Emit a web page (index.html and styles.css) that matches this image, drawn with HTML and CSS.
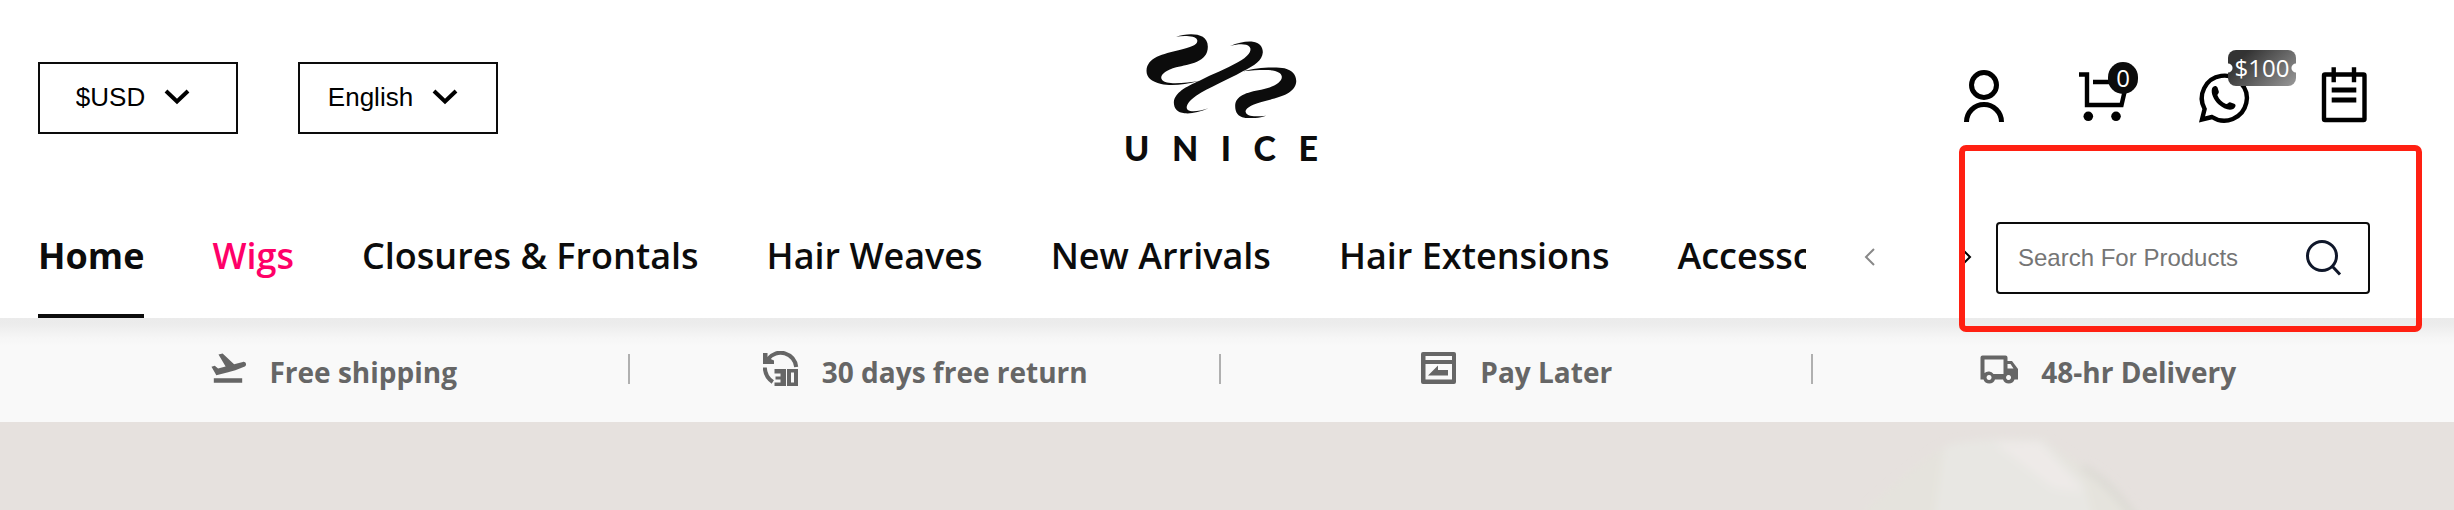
FILE: index.html
```
<!doctype html>
<html lang="en">
<head>
    <meta charset="utf-8">
    <meta name="viewport" content="width=device-width, initial-scale=1">
    <title>UNICE</title>
    <link rel="stylesheet" href="styles.css">
</head>
<body>

<header class="header">
    <div class="header-top">
        <div class="switchers">
            <label class="switcher">
                <select name="currency" aria-label="Currency">
                    <option>$USD</option>
                </select>
                <svg class="chevron" viewBox="0 0 26 16"><path d="M2 2l11 10.500L24 2"/></svg>
            </label>
            <label class="switcher">
                <select name="language" aria-label="Language">
                    <option>English</option>
                </select>
                <svg class="chevron" viewBox="0 0 26 16"><path d="M2 2l11 10.500L24 2"/></svg>
            </label>
        </div>

        <a href="#" class="logo" aria-label="UNICE">
            <svg class="logo-mark" viewBox="140 40 452 252">
                <path d="M230 48C262 38 325 32 325 78C325 125 270 130 230 140C195 150 178 166 188 178C200 194 260 187 300 180C250 195 210 195 185 190C155 182 141 170 141 150C143 110 190 100 240 88C275 80 297 72 293 58C288 45 255 45 230 48Z"/>
                <path d="M392 76C415 66 440 61 460 63C480 65 490 78 490 95C488 120 465 135 430 152C380 180 330 200 290 225C265 243 256 258 265 268C275 275 300 272 327 263C300 275 275 280 255 278C235 276 223 265 223 245C225 215 260 198 300 180C340 160 380 145 415 125C445 108 460 90 450 78C440 68 415 70 392 76Z"/>
                <path d="M430 152C470 140 530 138 555 143C580 150 592 165 590 185C585 220 540 230 500 240C460 250 440 260 438 272C440 290 470 288 500 285C480 293 450 294 435 291C415 287 407 275 407 255C408 225 440 215 485 207C520 200 548 185 547 168C545 148 510 143 430 152Z"/>
            </svg>
            <span class="logo-name"><span>U</span><span>N</span><span>I</span><span>C</span><span>E</span></span>
        </a>

        <div class="actions">
            <a href="#" class="action" aria-label="Account">
                <svg viewBox="0 0 52 52">
                    <circle cx="26" cy="15" r="12.500"/>
                    <path d="M8.500 52a17.500 17.500 0 0 1 35 0"/>
                </svg>
            </a>
            <a href="#" class="action" aria-label="Cart">
                <svg viewBox="0 0 52 52">
                    <path class="thin" d="M1 4.500h8V35h34.500l3-13M15 12h20"/>
                    <circle class="solid" cx="10.300" cy="46.300" r="4.800"/>
                    <circle class="solid" cx="38" cy="46.300" r="4.800"/>
                </svg>
                <span class="count">0</span>
            </a>
            <a href="#" class="action" aria-label="WhatsApp">
                <svg viewBox="0 0 52 52">
                    <path class="thin" d="M14 47L4 49.500l2.600-10.500A22.500 22.500 0 1 1 14 47z"/>
                    <path class="solid" d="M14 18.500c1-3 4.500-3.500 5.500-1l1.300 4c.5 1.700-1.800 2.700-1.300 4 1.600 4 4.500 6.800 8.500 8.500 1.500.5 2.500-2 4-1.700l4.200 1.500c2.500 1 1.200 4-1 5.200-4 2-10-.5-14.500-4.500-5-4.800-8-11-6.700-16z"/>
                </svg>
                <span class="coupon">$100</span>
            </a>
            <a href="#" class="action" aria-label="Orders">
                <svg viewBox="0 0 52 52">
                    <rect class="thin" x="6" y="4.500" width="40.500" height="45.500" rx="1"/>
                    <path class="thin" d="M15.700-2.700v15M36-2.700v15"/>
                    <path d="M13.700 20h24.600M13.700 30h24.600"/>
                </svg>
            </a>
        </div>
    </div>

    <div class="header-bottom">
        <nav class="menu">
            <a href="#" class="menu-item active">Home</a>
            <a href="#" class="menu-item hot">Wigs</a>
            <a href="#" class="menu-item">Closures &amp; Frontals</a>
            <a href="#" class="menu-item">Hair Weaves</a>
            <a href="#" class="menu-item">New Arrivals</a>
            <a href="#" class="menu-item">Hair Extensions</a>
            <a href="#" class="menu-item">Accessories</a>
        </nav>
        <div class="menu-arrows">
            <button type="button" class="arrow disabled" aria-label="Previous">
                <svg viewBox="0 0 12 18"><path d="M10 1L2 9l8 8"/></svg>
            </button>
            <button type="button" class="arrow" aria-label="Next">
                <svg viewBox="0 0 12 18"><path d="M2 1l8 8-8 8"/></svg>
            </button>
        </div>
        <form class="search" action="/" method="get">
            <input type="text" name="q" placeholder="Search For Products" aria-label="Search For Products">
            <button type="submit" aria-label="Search">
                <svg viewBox="0 0 36 36"><circle cx="16" cy="16" r="14.500"/><path d="M26 26l8 8.500"/></svg>
            </button>
        </form>
    </div>

    <div class="highlight"></div>
</header>

<ul class="services">
    <li>
        <svg viewBox="0.400 2 21.700 21.700"><path d="M2.700 18.400h17.100v2.800H2.700zM22.070 9.640c-.21-.8-1.040-1.280-1.840-1.060L14.920 10l-6.900-6.430-2.500.6 4.300 7.100-4.560 1.310-1.970-1.700-2 .6 1.820 3.160 1.100 2 1.800-.43 5.310-1.420 4.350-1.160L21 11.490c.81-.23 1.280-1.050 1.070-1.850z"/></svg>
        <span>Free shipping</span>
    </li>
    <li>
        <svg viewBox="0 0 36 36">
            <path class="line" d="M5 8a15.700 15.700 0 0 1 28.200 8M1.800 16.500c.2 6 3 11 8 14.500"/>
            <path d="M0 2h4.500v4.500l6.500 3V13H0z"/>
            <path fill-rule="evenodd" d="M11.500 18h11.500v17H11.500v-3.500h6v-3h-5v-3h5v-3h-6zM24 18h11v17H24zM28 21.500v10h3v-10z"/>
        </svg>
        <span>30 days free return</span>
    </li>
    <li>
        <svg viewBox="0 0 36 36">
            <path fill-rule="evenodd" d="M2 1h31q2 0 2 2v28q0 2-2 2H2q-2 0-2-2V3q0-2 2-2zM4.500 5v4h26.500V5zM4.500 13v15.500h26.500V13z"/>
            <path d="M7 24.500l10-10v4.500h10v5.500z"/>
        </svg>
        <span>Pay Later</span>
    </li>
    <li>
        <svg class="truck" viewBox="0 0 38 36">
            <path fill-rule="evenodd" d="M2.500 4.500h23q2 0 2 2V10H32l6 8v10.500h-3.500a6 5.500 0 0 1-11.500 0h-8a6 5.500 0 0 1-11.500 0H.500v-22q0-2 2-2zM4.500 8.500v13.500a6 6 0 0 1 9 1h10v-14.500zM27.500 13v4.500h6L30.500 13zM9 24a2.500 2.500 0 1 0 .1 0zM28.500 24a2.500 2.500 0 1 0 .1 0z"/>
        </svg>
        <span>48-hr Delivery</span>
    </li>
</ul>

<section class="banner">
    <svg class="banner-art" viewBox="0 0 300 88">
        <defs>
            <filter id="soft"><feGaussianBlur stdDeviation="4"/></filter>
        </defs>
        <g filter="url(#soft)">
            <path fill="#e5e3dd" d="M0 100Q40 60 85 28L190 20Q260 60 290 100z"/>
            <path fill="#e8e7e3" d="M90 25Q120 14 190 18L230 60L240 100H80z"/>
            <path fill="#eeeae8" d="M140 20H185L230 70L200 66z"/>
            <path fill="#dcdad4" d="M228 42Q255 52 288 100H280Q255 65 228 48z"/>
        </g>
    </svg>
</section>

</body>
</html>
```
FILE: styles.css
```
* {
    box-sizing: border-box;
}

body {
    margin: 0;
    background: #e6e1de;
    color: #0c0c0c;
    font-family: "Open Sans", "Noto Sans", sans-serif;
}

a {
    color: inherit;
    text-decoration: none;
}

button {
    border: none;
    background: none;
    padding: 0;
    cursor: pointer;
}

.header {
    position: relative;
    background: #fff;
    padding: 0 50px 0 38px;
}

.header-top {
    display: grid;
    grid-template-columns: 1fr auto 1fr;
    align-items: center;
    height: 198px;
    padding-bottom: 2px;
}

.switchers {
    display: flex;
    gap: 60px;
}

.switcher {
    display: flex;
    align-items: center;
    justify-content: center;
    gap: 19px;
    width: 200px;
    height: 72px;
    border: 2px solid #0c0c0c;
    padding: 0 10px 2px 0;
}

.switcher select {
    appearance: none;
    field-sizing: content;
    border: none;
    background: none;
    padding: 0;
    color: #000;
    font-family: "Liberation Sans", Arial, sans-serif;
    font-size: 26px;
}

.chevron {
    width: 26px;
    height: 16px;
    fill: none;
    stroke: #000;
    stroke-width: 4;
}

.logo {
    display: flex;
    flex-direction: column;
    align-items: center;
    gap: 12px;
    padding-top: 4px;
}

.logo-mark {
    width: 151px;
    height: 84px;
    fill: #0c0c0c;
}

.logo-name {
    display: flex;
    justify-content: space-between;
    width: 194px;
    font-family: Lato, sans-serif;
    font-size: 34px;
    font-weight: 900;
    line-height: 36px;
}

.actions {
    display: flex;
    justify-content: flex-end;
    gap: 68px;
    padding: 0 34px 4px 0;
}

.action {
    position: relative;
    width: 52px;
    height: 52px;
}

.action svg {
    display: block;
    overflow: visible;
    fill: none;
    stroke: #000;
    stroke-width: 5;
}

.action .thin {
    stroke-width: 4.4;
}

.action .solid {
    fill: #000;
    stroke: none;
}

.count,
.coupon {
    position: absolute;
    left: 30px;
    color: #fff;
    text-align: center;
}

.count {
    top: -8px;
    width: 30px;
    border-radius: 16px;
    background: #0c0c0c;
    font-size: 24px;
    line-height: 32px;
}

.coupon {
    top: -20px;
    width: 68px;
    border-radius: 8px;
    background:
        radial-gradient(circle at 0 50%, #fff 4px, transparent 5px),
        radial-gradient(circle at 100% 50%, #fff 4px, transparent 5px),
        linear-gradient(135deg, #333 20%, #999);
    font-size: 24px;
    line-height: 36px;
}

.header-bottom {
    display: flex;
    align-items: center;
    padding-right: 34px;
}

.menu {
    display: flex;
    flex: 1;
    gap: 68px;
    min-width: 0;
    overflow: hidden;
}

.menu-item {
    flex: none;
    border-bottom: 4px solid transparent;
    font-size: 36px;
    font-weight: 600;
    line-height: 116px;
    white-space: nowrap;
}

.menu-item.active {
    border-color: #0c0c0c;
    font-weight: 700;
}

.menu-item.hot {
    color: #ff0068;
}

.menu-arrows {
    display: flex;
    gap: 56px;
    margin: 0 10px 0 44px;
}

.arrow {
    width: 40px;
    height: 40px;
}

.arrow svg {
    width: 12px;
    height: 18px;
    fill: none;
    stroke: #000;
    stroke-width: 2;
}

.arrow.disabled svg {
    stroke: #888;
}

.search {
    display: flex;
    align-items: center;
    width: 374px;
    height: 72px;
    border: 2px solid #0c0c0c;
    border-radius: 4px;
    padding: 0 26px 0 20px;
}

.search input {
    flex: 1;
    min-width: 0;
    border: none;
    outline: none;
    padding: 0;
    font-family: "Liberation Sans", Arial, sans-serif;
    font-size: 24px;
}

.search input::placeholder {
    color: #757575;
}

.search svg {
    display: block;
    width: 36px;
    height: 36px;
    fill: none;
    stroke: #0f172a;
    stroke-width: 3;
}

.highlight {
    position: absolute;
    z-index: 1;
    right: 32px;
    bottom: -14px;
    width: 463px;
    height: 187px;
    border: 6px solid #ff2012;
    border-radius: 7px;
    pointer-events: none;
}

.services {
    display: grid;
    grid-template-columns: repeat(4, 1fr);
    margin: 0;
    padding: 0 50px 0 38px;
    list-style: none;
    background: linear-gradient(#ebebeb, #ececec 6px, #f6f6f6 20px, #f9f9f9 28px);
    color: #666;
}

.services li {
    position: relative;
    display: flex;
    align-items: center;
    justify-content: center;
    gap: 23px;
    height: 104px;
    padding-top: 4px;
    font-size: 28px;
    font-weight: 700;
    line-height: 36px;
}

.services li + li::before {
    content: "";
    position: absolute;
    left: -2px;
    top: 36px;
    width: 2px;
    height: 30px;
    background: #b0b0b0;
}

.services svg {
    width: 36px;
    height: 36px;
    margin-bottom: 6px;
    fill: #666;
}

.services .truck {
    width: 38px;
}

.services .line {
    fill: none;
    stroke: #666;
    stroke-width: 4;
}

.banner {
    display: flex;
    justify-content: flex-end;
    height: 88px;
    padding-right: 300px;
    overflow: hidden;
}

.banner-art {
    width: 300px;
    height: 88px;
}
```
